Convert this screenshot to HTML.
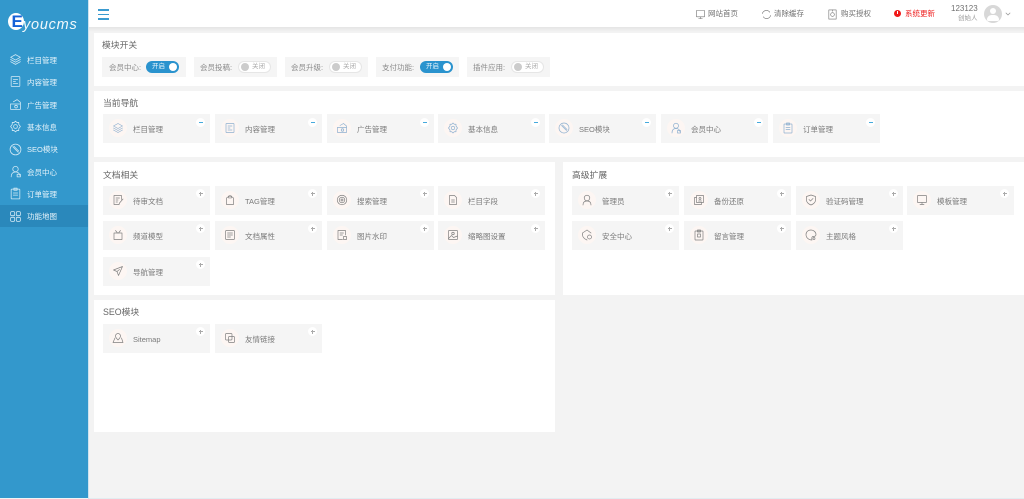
<!DOCTYPE html>
<html lang="zh"><head><meta charset="utf-8"><title>Eyoucms</title>
<style>
*{margin:0;padding:0;box-sizing:border-box}
html,body{width:1024px;height:499px;overflow:hidden;background:#f3f3f3;font-family:"Liberation Sans","Noto Sans CJK SC",sans-serif}
#r{position:relative;width:1024px;height:499px;overflow:hidden;filter:blur(.35px)}
#r div,#r span,#r svg,#r b,#r i{position:absolute}
.side{left:0;top:0;width:88px;height:498px;background:#3398cc}
.line{left:88px;top:0;width:1px;height:499px;background:#cfe3ef}
.bot{left:89px;top:498px;width:935px;height:1px;background:#e2ecf0}
.act{left:0;top:205px;width:88px;height:22px;background:#2a88bb}
.m{left:27px;font-size:7.5px;line-height:12px;color:#e6f3fa;white-space:nowrap}
.mi{left:9px;width:13px;height:13px;color:#d6ebf6;stroke-width:1.4}
.top{left:89px;top:0;width:935px;height:27px;background:#fff}
.sh{left:89px;top:27px;width:935px;height:5px;background:linear-gradient(#e4e4e4,#f3f3f3)}
.p{background:#fff}
.t{font-size:8.8px;line-height:12px;color:#666;white-space:nowrap}
.h{font-size:7.5px;line-height:12px;color:#707070;white-space:nowrap;top:8px}
.hi{width:11px;height:11px;top:9px;color:#707070;stroke-width:1.3}
.s{top:57px;height:20px;background:#f5f5f5}
.l{top:61.500px;font-size:7.5px;line-height:12px;color:#8a8a8a;white-space:nowrap}
.on,.of{top:61px;width:33px;height:12px;border-radius:6px;font-size:6.5px;line-height:12px}
.on{background:#2a93ce;color:#e8f5fb}
.of{background:#fff;border:1px solid #e6e6e6;color:#aaa}
.on b,.of b{top:2px;width:8px;height:8px;border-radius:50%}
.on b{right:2px;background:#fff}
.of b{left:2px;top:1px;background:#ccc}
.on span{left:6px;top:0}
.of span{left:13px;top:-1px}
.c{width:107px;height:29px;background:#f5f5f5}
.c i{left:6px;top:5px;width:18px;height:18px;border-radius:50%;background:#fdf6f3}
.c svg{left:9px;top:8px;width:12px;height:12px;color:#808080;stroke-width:1.4}
.c.n svg{color:#8fb0d0}
.c span{left:30px;top:9px;font-size:7.5px;line-height:12px;color:#7a7a7a;white-space:nowrap;margin-top:1px}
.c b{left:93px;top:3px;width:9px;height:9px;border-radius:50%;background:#fff;font-weight:400}
.c b:before{content:"";position:absolute;left:2.5px;top:4px;width:4px;height:1px;background:#aaa}
.c b:after{content:"";position:absolute;left:4px;top:2.5px;width:1px;height:4px;background:#aaa}
.c.n b{top:4px}
.c.n b:before{background:#45aadd}
.c.n b:after{display:none}
svg{fill:none;stroke:currentColor;stroke-width:1.6;stroke-linejoin:round;stroke-linecap:round}
</style></head><body>
<svg width="0" height="0" style="position:absolute"><defs>
<symbol id="layers" viewBox="0 0 24 24"><path d="M12 3l9 5-9 5-9-5z"/><path d="M3 12l9 5 9-5M3 16l9 5 9-5"/></symbol>
<symbol id="doc" viewBox="0 0 24 24"><rect x="4" y="3" width="16" height="18" rx="1"/><path d="M8 8h8M8 12h4M8 16h8"/></symbol>
<symbol id="ad" viewBox="0 0 24 24"><path d="M3 11v10h18V8l-6-5-7 4"/><path d="M3 11h18"/><circle cx="13" cy="16" r="2.5"/></symbol>
<symbol id="gear" viewBox="0 0 24 24"><path d="M12 2l2.500 2.500h3.500v3.500l3 4-3 4v3.500h-3.500L12 22l-2.500-2.500H6V16l-3-4 3-4V4.500h3.500z"/><circle cx="12" cy="12" r="3.500"/></symbol>
<symbol id="seo" viewBox="0 0 24 24"><circle cx="12" cy="12" r="10"/><path d="M7 7l10 10M9 6l9 9"/></symbol>
<symbol id="user" viewBox="0 0 24 24"><circle cx="12" cy="7.500" r="5"/><path d="M4 22c0-6 3-9 8-9s7 2 8 6"/><rect x="15" y="17" width="6" height="5"/></symbol>
<symbol id="order" viewBox="0 0 24 24"><rect x="4" y="4" width="16" height="18" rx="1"/><path d="M9 2h6v4H9zM8 11h8M8 15h8"/></symbol>
<symbol id="grid" viewBox="0 0 24 24"><rect x="3" y="3" width="7.500" height="7.500" rx="2"/><rect x="13.500" y="3" width="7.500" height="7.500" rx="2"/><rect x="3" y="13.500" width="7.500" height="7.500" rx="2"/><rect x="13.500" y="13.500" width="7.500" height="7.500" rx="2"/></symbol>
<symbol id="edit" viewBox="0 0 24 24"><path d="M19 11V3H4v18h10"/><path d="M8 8h7M8 12h4M8 16h3M22 10l-7 8-1 3"/></symbol>
<symbol id="tag" viewBox="0 0 24 24"><path d="M5 8l7-5 7 5v13H5z"/><path d="M9 8V4M15 8V4M12 3v6"/></symbol>
<symbol id="target" viewBox="0 0 24 24"><circle cx="12" cy="12" r="9.500"/><circle cx="12" cy="12" r="5.500"/><circle cx="12" cy="12" r="2"/></symbol>
<symbol id="file" viewBox="0 0 24 24"><path d="M5 3h10l4 4v14H5z"/><path d="M9 12h6M9 16h6"/></symbol>
<symbol id="tv" viewBox="0 0 24 24"><rect x="4" y="8" width="16" height="13"/><path d="M7 3l4 5M17 3l-4 5"/></symbol>
<symbol id="list" viewBox="0 0 24 24"><rect x="3" y="3" width="18" height="18" rx="2"/><path d="M7 8h10M7 12h10M7 16h6"/></symbol>
<symbol id="mark" viewBox="0 0 24 24"><path d="M19 12V3H4v18h9"/><path d="M8 8h7M8 12h5M15 15h6v6h-6z"/></symbol>
<symbol id="thumb" viewBox="0 0 24 24"><rect x="3" y="3" width="18" height="18" rx="1"/><circle cx="12" cy="9" r="2.500"/><path d="M3 19l6-6 4 4 8-3"/></symbol>
<symbol id="send" viewBox="0 0 24 24"><path d="M21 3L3 10l7 3 3 8zM10 13l5-4"/></symbol>
<symbol id="admin" viewBox="0 0 24 24"><circle cx="12" cy="8" r="5.500"/><path d="M4 22c0-5 3-8 8-8s8 3 8 8"/></symbol>
<symbol id="backup" viewBox="0 0 24 24"><rect x="7" y="3" width="14" height="14"/><path d="M7 7H3v14h14v-4"/><circle cx="14" cy="9" r="2"/><path d="M11 14h6"/></symbol>
<symbol id="shield" viewBox="0 0 24 24"><path d="M12 2l9 3v7c0 5-4 8-9 10-5-2-9-5-9-10V5z"/><path d="M8 11l3 3 5-5"/></symbol>
<symbol id="mon" viewBox="0 0 24 24"><rect x="3" y="3" width="18" height="14" rx="1"/><path d="M8 21h8M12 17v4"/></symbol>
<symbol id="safe" viewBox="0 0 24 24"><path d="M20 8l-8-6-9 6c-1 7 3 12 9 14"/><circle cx="17" cy="16" r="4"/></symbol>
<symbol id="msg" viewBox="0 0 24 24"><rect x="4" y="4" width="16" height="18" rx="1"/><path d="M9 2h6v4H9z"/><rect x="9" y="10" width="6" height="6"/></symbol>
<symbol id="theme" viewBox="0 0 24 24"><path d="M14 22C7 22 2 17 2 11S7 2 12 2s10 4 10 9c0 4-4 4-6 4s-3 2-2 7z"/><circle cx="18" cy="19" r="2"/></symbol>
<symbol id="map" viewBox="0 0 24 24"><path d="M6 12l-4 9h20l-3-9"/><path d="M12 16c-3-3-5-5-5-8a5 5 0 0 1 10 0c0 3-2 5-5 8z"/></symbol>
<symbol id="copy" viewBox="0 0 24 24"><rect x="3" y="3" width="13" height="13" rx="2"/><rect x="9" y="9" width="12" height="12" rx="2"/></symbol>
<symbol id="cart" viewBox="0 0 24 24"><rect x="4" y="2" width="16" height="20"/><circle cx="12" cy="12" r="4"/><path d="M12 2v3"/></symbol>
<symbol id="ref" viewBox="0 0 24 24"><path d="M3 10a9 9 0 0 1 16-3M21 14a9 9 0 0 1-16 3"/></symbol>
</defs></svg>
<div id="r">
<div class="side"></div><div class="line"></div><div class="bot"></div><div class="act"></div>
<div style="left:8px;top:13px;width:16px;height:17px;border-radius:50%;background:#fff"></div>
<div style="left:11.500px;top:13.500px;font:700 17px/16px 'Liberation Sans',sans-serif;color:#1561d8">E</div>
<div style="left:23px;top:15.500px;font:italic 400 14.500px/18px 'Liberation Sans',sans-serif;color:#f2f9fc;letter-spacing:.75px">youcms</div>

<svg class="mi" style="top:53px"><use href="#layers"/></svg><div class="m" style="top:54.500px">栏目管理</div>
<svg class="mi" style="top:75px"><use href="#doc"/></svg><div class="m" style="top:76.500px">内容管理</div>
<svg class="mi" style="top:98px"><use href="#ad"/></svg><div class="m" style="top:99.500px">广告管理</div>
<svg class="mi" style="top:120px"><use href="#gear"/></svg><div class="m" style="top:121.500px">基本信息</div>
<svg class="mi" style="top:143px"><use href="#seo"/></svg><div class="m" style="top:144px">SEO模块</div>
<svg class="mi" style="top:165px"><use href="#user"/></svg><div class="m" style="top:166.500px">会员中心</div>
<svg class="mi" style="top:187px"><use href="#order"/></svg><div class="m" style="top:188.500px">订单管理</div>
<svg class="mi" style="top:210px"><use href="#grid"/></svg><div class="m" style="top:211px">功能地图</div>

<div class="top"></div><div class="sh"></div>
<div style="left:98px;top:9px;width:11px;height:1.500px;background:#3b9bd0"></div>
<div style="left:98px;top:13.500px;width:11px;height:1.500px;background:#3b9bd0"></div>
<div style="left:98px;top:18px;width:11px;height:1.500px;background:#3b9bd0"></div>
<svg class="hi" style="left:695px"><use href="#mon"/></svg><div class="h" style="left:708px">网站首页</div>
<svg class="hi" style="left:761px"><use href="#ref"/></svg><div class="h" style="left:774px">清除缓存</div>
<svg class="hi" style="left:827px"><use href="#cart"/></svg><div class="h" style="left:841px">购买授权</div>
<div style="left:894px;top:10px;width:7px;height:7px;border-radius:50%;background:#f01818"></div>
<div style="left:897px;top:11px;width:1px;height:3px;background:#fff"></div>
<div class="h" style="left:905px;color:#ee2222">系统更新</div>
<div style="left:951px;top:3px;font-size:8px;line-height:12px;color:#707070">123123</div>
<div style="left:958px;top:14px;font-size:6.500px;line-height:10px;color:#999">创始人</div>
<div style="left:984px;top:5px;width:18px;height:18px;border-radius:50%;background:#d8d8d8"></div>
<div style="left:990px;top:8px;width:6px;height:6px;border-radius:50%;background:#fff"></div>
<div style="left:987px;top:15px;width:12px;height:6px;border-radius:6px 6px 2px 2px;background:#fff"></div>
<svg style="left:1005px;top:11px;width:6px;height:6px;color:#999" viewBox="0 0 12 12"><path d="M2 4l4 4 4-4"/></svg>

<div class="p" style="left:94px;top:33px;width:930px;height:52.500px"></div>
<div class="t" style="left:102px;top:39px">模块开关</div>
<div class="s" style="left:102px;width:84px"></div><div class="l" style="left:109px">会员中心:</div><div class="on" style="left:146px"><span>开启</span><b></b></div>
<div class="s" style="left:194px;width:83px"></div><div class="l" style="left:200px">会员投稿:</div><div class="of" style="left:238px"><span>关闭</span><b></b></div>
<div class="s" style="left:285px;width:83px"></div><div class="l" style="left:291px">会员升级:</div><div class="of" style="left:329px"><span>关闭</span><b></b></div>
<div class="s" style="left:376px;width:83px"></div><div class="l" style="left:382px">支付功能:</div><div class="on" style="left:420px"><span>开启</span><b></b></div>
<div class="s" style="left:467px;width:83px"></div><div class="l" style="left:473px">插件应用:</div><div class="of" style="left:511px"><span>关闭</span><b></b></div>

<div class="p" style="left:94px;top:91px;width:930px;height:66px"></div>
<div class="t" style="left:103px;top:97px">当前导航</div>
<div class="c n" style="left:103px;top:114px"><i></i><svg><use href="#layers"/></svg><span>栏目管理</span><b></b></div>
<div class="c n" style="left:215px;top:114px"><i></i><svg><use href="#doc"/></svg><span>内容管理</span><b></b></div>
<div class="c n" style="left:327px;top:114px"><i></i><svg><use href="#ad"/></svg><span>广告管理</span><b></b></div>
<div class="c n" style="left:438px;top:114px"><i></i><svg><use href="#gear"/></svg><span>基本信息</span><b></b></div>
<div class="c n" style="left:549px;top:114px"><i></i><svg><use href="#seo"/></svg><span>SEO模块</span><b></b></div>
<div class="c n" style="left:661px;top:114px"><i></i><svg><use href="#user"/></svg><span>会员中心</span><b></b></div>
<div class="c n" style="left:773px;top:114px"><i></i><svg><use href="#order"/></svg><span>订单管理</span><b></b></div>

<div class="p" style="left:94px;top:162px;width:461px;height:133px"></div>
<div class="t" style="left:103px;top:169px">文档相关</div>
<div class="c" style="left:103px;top:186px"><i></i><svg><use href="#edit"/></svg><span>待审文档</span><b></b></div>
<div class="c" style="left:215px;top:186px"><i></i><svg><use href="#tag"/></svg><span>TAG管理</span><b></b></div>
<div class="c" style="left:327px;top:186px"><i></i><svg><use href="#target"/></svg><span>搜索管理</span><b></b></div>
<div class="c" style="left:438px;top:186px"><i></i><svg><use href="#file"/></svg><span>栏目字段</span><b></b></div>
<div class="c" style="left:103px;top:221px"><i></i><svg><use href="#tv"/></svg><span>频道模型</span><b></b></div>
<div class="c" style="left:215px;top:221px"><i></i><svg><use href="#list"/></svg><span>文档属性</span><b></b></div>
<div class="c" style="left:327px;top:221px"><i></i><svg><use href="#mark"/></svg><span>图片水印</span><b></b></div>
<div class="c" style="left:438px;top:221px"><i></i><svg><use href="#thumb"/></svg><span>缩略图设置</span><b></b></div>
<div class="c" style="left:103px;top:257px"><i></i><svg><use href="#send"/></svg><span>导航管理</span><b></b></div>

<div class="p" style="left:563px;top:162px;width:461px;height:133px"></div>
<div class="t" style="left:572px;top:169px">高级扩展</div>
<div class="c" style="left:572px;top:186px"><i></i><svg><use href="#admin"/></svg><span>管理员</span><b></b></div>
<div class="c" style="left:684px;top:186px"><i></i><svg><use href="#backup"/></svg><span>备份还原</span><b></b></div>
<div class="c" style="left:796px;top:186px"><i></i><svg><use href="#shield"/></svg><span>验证码管理</span><b></b></div>
<div class="c" style="left:907px;top:186px"><i></i><svg><use href="#mon"/></svg><span>模板管理</span><b></b></div>
<div class="c" style="left:572px;top:221px"><i></i><svg><use href="#safe"/></svg><span>安全中心</span><b></b></div>
<div class="c" style="left:684px;top:221px"><i></i><svg><use href="#msg"/></svg><span>留言管理</span><b></b></div>
<div class="c" style="left:796px;top:221px"><i></i><svg><use href="#theme"/></svg><span>主题风格</span><b></b></div>

<div class="p" style="left:94px;top:300px;width:461px;height:132px"></div>
<div class="t" style="left:103px;top:306px">SEO模块</div>
<div class="c" style="left:103px;top:324px"><i></i><svg><use href="#map"/></svg><span>Sitemap</span><b></b></div>
<div class="c" style="left:215px;top:324px"><i></i><svg><use href="#copy"/></svg><span>友情链接</span><b></b></div>
</div>
</body></html>
